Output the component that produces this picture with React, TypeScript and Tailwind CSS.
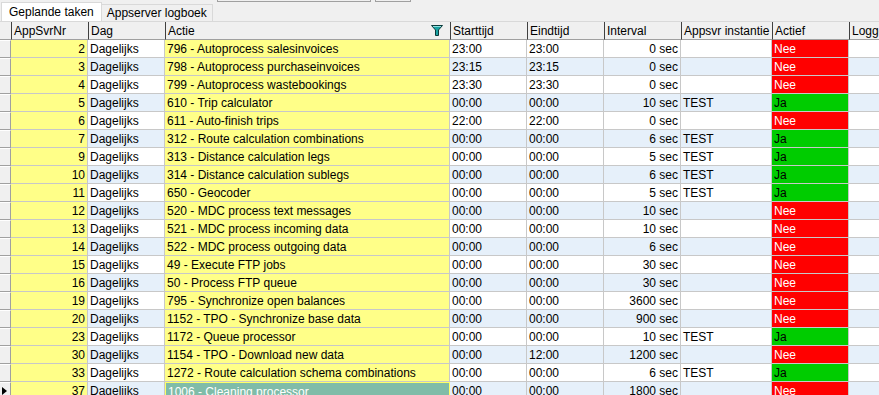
import React from "react";

type Row = {
  nr: number;
  actie: string;
  start: string;
  eind: string;
  interval: string;
  inst: string;
  actief: boolean;
};

const rows: Row[] = [
  { nr: 2, actie: "796 - Autoprocess salesinvoices", start: "23:00", eind: "23:00", interval: "0 sec", inst: "", actief: false },
  { nr: 3, actie: "798 - Autoprocess purchaseinvoices", start: "23:15", eind: "23:15", interval: "0 sec", inst: "", actief: false },
  { nr: 4, actie: "799 - Autoprocess wastebookings", start: "23:30", eind: "23:30", interval: "0 sec", inst: "", actief: false },
  { nr: 5, actie: "610 - Trip calculator", start: "00:00", eind: "00:00", interval: "10 sec", inst: "TEST", actief: true },
  { nr: 6, actie: "611 - Auto-finish trips", start: "22:00", eind: "22:00", interval: "0 sec", inst: "", actief: false },
  { nr: 7, actie: "312 - Route calculation combinations", start: "00:00", eind: "00:00", interval: "6 sec", inst: "TEST", actief: true },
  { nr: 9, actie: "313 - Distance calculation legs", start: "00:00", eind: "00:00", interval: "5 sec", inst: "TEST", actief: true },
  { nr: 10, actie: "314 - Distance calculation sublegs", start: "00:00", eind: "00:00", interval: "6 sec", inst: "TEST", actief: true },
  { nr: 11, actie: "650 - Geocoder", start: "00:00", eind: "00:00", interval: "5 sec", inst: "TEST", actief: true },
  { nr: 12, actie: "520 - MDC process text messages", start: "00:00", eind: "00:00", interval: "10 sec", inst: "", actief: false },
  { nr: 13, actie: "521 - MDC process incoming data", start: "00:00", eind: "00:00", interval: "10 sec", inst: "", actief: false },
  { nr: 14, actie: "522 - MDC process outgoing data", start: "00:00", eind: "00:00", interval: "6 sec", inst: "", actief: false },
  { nr: 15, actie: "49 - Execute FTP jobs", start: "00:00", eind: "00:00", interval: "30 sec", inst: "", actief: false },
  { nr: 16, actie: "50 - Process FTP queue", start: "00:00", eind: "00:00", interval: "30 sec", inst: "", actief: false },
  { nr: 19, actie: "795 - Synchronize open balances", start: "00:00", eind: "00:00", interval: "3600 sec", inst: "", actief: false },
  { nr: 20, actie: "1152 - TPO - Synchronize base data", start: "00:00", eind: "00:00", interval: "900 sec", inst: "", actief: false },
  { nr: 23, actie: "1172 - Queue processor", start: "00:00", eind: "00:00", interval: "10 sec", inst: "TEST", actief: true },
  { nr: 30, actie: "1154 - TPO - Download new data", start: "00:00", eind: "12:00", interval: "1200 sec", inst: "", actief: false },
  { nr: 33, actie: "1272 - Route calculation schema combinations", start: "00:00", eind: "00:00", interval: "6 sec", inst: "TEST", actief: true },
  { nr: 37, actie: "1006 - Cleaning processor", start: "00:00", eind: "00:00", interval: "1800 sec", inst: "", actief: false },
];

const cols = "grid grid-cols-[11px_77px_77px_285px_77px_77px_77px_91px_77px_1fr]";
const cell = "h-[18px] border-r border-b border-[#c8c8c8] px-[2px] leading-[18px] whitespace-nowrap overflow-hidden";

const FilterIcon = () => (
  <svg width="12" height="11" viewBox="0 0 12 11" className="mr-[5px]">
    <path d="M0.5 0.5 H11.5 L7.5 5 V10.5 H4.5 V5 Z" fill="#1aa3a3" stroke="#0b3b3b" strokeWidth="1" />
    <path d="M2 1.5 H10" stroke="#8fe0e0" strokeWidth="1" />
  </svg>
);

const Header = ({ label, icon }: { label: string; icon?: boolean }) => (
  <div className="h-[18px] bg-[#f0f0f0] border-l border-[#404040] border-b border-b-[#a0a0a0] px-[2px] leading-[18px] flex items-center justify-between whitespace-nowrap overflow-hidden">
    <span>{label}</span>
    {icon && <FilterIcon />}
  </div>
);

export default function App() {
  return (
    <div className="w-[879px] h-[395px] overflow-hidden bg-[#f0f0f0] text-[12px] text-black [font-family:'Liberation_Sans',Arial,sans-serif]">
      {/* stray controls above */}
      <div className="relative h-[3px]">
        <div className="absolute left-[217px] top-[-10px] w-[154px] h-[12px] border border-[#a0a0a0] bg-[#f0f0f0]" />
        <div className="absolute left-[375px] top-[-10px] w-[36px] h-[12px] border border-[#a0a0a0] bg-[#f0f0f0]" />
      </div>

      {/* tabs */}
      <div className="flex items-end h-[19px] pl-[1px] border-b border-[#d9d9d9]">
        <div className="h-[19px] px-[7px] bg-white border border-b-0 border-[#d9d9d9] leading-[18px]">Geplande taken</div>
        <div className="h-[17px] px-[5px] bg-[#f0f0f0] border border-l-0 border-b-0 border-[#d9d9d9] leading-[16px]">Appserver logboek</div>
      </div>

      {/* grid header */}
      <div className={cols}>
        <div className="h-[18px] bg-[#f0f0f0] border-b border-[#a0a0a0]" />
        <Header label="AppSvrNr" />
        <Header label="Dag" />
        <Header label="Actie" icon />
        <Header label="Starttijd" />
        <Header label="Eindtijd" />
        <Header label="Interval" />
        <Header label="Appsvr instantie" />
        <Header label="Actief" />
        <Header label="Logge" />
      </div>

      {/* rows */}
      {rows.map((r, i) => {
        const bg = i % 2 === 0 ? "bg-white" : "bg-[#e6f0fa]";
        const sel = r.nr === 37;
        return (
          <div key={r.nr} className={cols}>
            <div className="h-[18px] bg-[#f0f0f0] border-r border-b border-[#a0a0a0] border-t border-t-white flex items-center">
              {sel && (
                <svg width="8" height="10" viewBox="0 0 8 10">
                  <path d="M2 1 L7 5 L2 9 Z" fill="#000" />
                </svg>
              )}
            </div>
            <div className={`${cell} bg-[#ffff88] text-right`}>{r.nr}</div>
            <div className={`${cell} ${bg}`}>Dagelijks</div>
            {sel ? (
              <div className={`${cell} bg-[#80bca8] text-white border border-[#ffff66]`}>{r.actie}</div>
            ) : (
              <div className={`${cell} bg-[#ffff88]`}>{r.actie}</div>
            )}
            <div className={`${cell} ${bg}`}>{r.start}</div>
            <div className={`${cell} ${bg}`}>{r.eind}</div>
            <div className={`${cell} ${bg} text-right`}>{r.interval}</div>
            <div className={`${cell} ${bg}`}>{r.inst}</div>
            {r.actief ? (
              <div className={`${cell} bg-[#00cc00] text-black`}>Ja</div>
            ) : (
              <div className={`${cell} bg-[#ff0000] text-white`}>Nee</div>
            )}
            <div className={`${cell} ${bg} border-r-0`} />
          </div>
        );
      })}
    </div>
  );
}
